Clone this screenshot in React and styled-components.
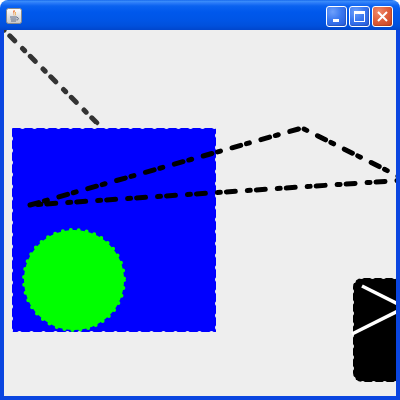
import React from "react";
import styled, { createGlobalStyle } from "styled-components";

const Global = createGlobalStyle`
  html, body { margin: 0; padding: 0; background: #ffffff; }
  body { font-family: "Liberation Sans", Arial, sans-serif; }
`;

const Window = styled.div`
  width: 400px;
  height: 400px;
  display: flex;
  flex-direction: column;
  overflow: hidden;
  border-radius: 8px 8px 0 0;
`;

const TitleBar = styled.div`
  height: 30px;
  flex: none;
  box-sizing: border-box;
  display: flex;
  align-items: flex-start;
  justify-content: space-between;
  padding: 6px 7px 0 6px;
  background: linear-gradient(
    to bottom,
    #0a5ce8 0px,
    #3d8ffb 1px,
    #2a7af8 3px,
    #0a62f0 6px,
    #0058ec 12px,
    #0055e6 20px,
    #0050dc 26px,
    #0046cc 30px
  );
`;

const AppIcon = styled.svg`
  width: 16px;
  height: 16px;
  margin-top: 2px;
  display: block;
`;

const Controls = styled.div`
  display: flex;
  gap: 2px;
`;

const CaptionButton = styled.div`
  width: 21px;
  height: 21px;
  box-sizing: border-box;
  border: 1px solid #ffffff;
  border-radius: 3px;
  display: flex;
  align-items: center;
  justify-content: center;
  background: ${(p) =>
    p.$close
      ? "radial-gradient(circle at 30% 25%, #f08a6c 0%, #e0603c 45%, #c8401e 100%)"
      : "radial-gradient(circle at 30% 25%, #6ea0fb 0%, #3a78f0 45%, #2558d8 100%)"};
  box-shadow: inset -1px -1px 1px rgba(0, 0, 0, 0.15);
`;

const Frame = styled.div`
  flex: 1;
  display: flex;
  box-sizing: border-box;
  border-style: solid;
  border-width: 0 4px 4px 4px;
  border-color: #0a45e0;
`;

const Canvas = styled.div`
  flex: 1;
  background: #eeeeee;
  overflow: hidden;
  display: flex;
`;

const Drawing = styled.svg`
  display: block;
  width: 392px;
  height: 366px;
`;

function JavaIcon() {
  return (
    <AppIcon viewBox="0 0 16 16">
      <defs>
        <linearGradient id="ib" x1="0" y1="0" x2="0" y2="1">
          <stop offset="0" stopColor="#ffffff" />
          <stop offset="1" stopColor="#c8c8c8" />
        </linearGradient>
      </defs>
      <rect x="0.5" y="0.5" width="15" height="15" rx="2" fill="url(#ib)" stroke="#8a8a8a" />
      <path d="M8 2 C6 4 9 5 7 8 C9 6 7 5 9 3 Z" fill="#e8601c" />
      <path d="M9.5 4 C8.5 5.5 10 6 9 7.5" stroke="#f0a030" strokeWidth="1" fill="none" />
      <path d="M4 9 H11 M4.5 11 H10.5 M5 13 H10" stroke="#5a6a88" strokeWidth="1" />
      <path d="M11 9.5 C13 9.5 13 12 10.5 12" stroke="#5a6a88" strokeWidth="1" fill="none" />
    </AppIcon>
  );
}

function MinGlyph() {
  return (
    <svg width="13" height="13" viewBox="0 0 13 13">
      <rect x="3" y="9" width="6" height="3" fill="#ffffff" />
    </svg>
  );
}

function MaxGlyph() {
  return (
    <svg width="13" height="13" viewBox="0 0 13 13">
      <rect x="1.5" y="1.5" width="10" height="10" fill="none" stroke="#ffffff" />
      <rect x="1" y="1" width="11" height="3" fill="#ffffff" />
    </svg>
  );
}

function CloseGlyph() {
  return (
    <svg width="13" height="13" viewBox="0 0 13 13">
      <path d="M2 2 L11 11 M11 2 L2 11" stroke="#ffffff" strokeWidth="2" />
    </svg>
  );
}

export default function App() {
  return (
    <>
      <Global />
      <Window>
        <TitleBar>
          <JavaIcon />
          <Controls>
            <CaptionButton>
              <MinGlyph />
            </CaptionButton>
            <CaptionButton>
              <MaxGlyph />
            </CaptionButton>
            <CaptionButton $close>
              <CloseGlyph />
            </CaptionButton>
          </Controls>
        </TitleBar>
        <Frame>
          <Canvas>
            <Drawing viewBox="4 30 392 366">
              <line
                x1="2"
                y1="28"
                x2="140"
                y2="166"
                stroke="#333333"
                strokeWidth="5"
                strokeDasharray="3 8 7 11"
                strokeLinecap="round"
              />
              <rect x="12" y="128" width="204" height="204" fill="#0000ff" shapeRendering="crispEdges" />
              <rect
                x="10.5"
                y="126.5"
                width="207"
                height="207"
                fill="none"
                stroke="#eeeeee"
                strokeWidth="5"
                strokeDasharray="0 12"
                strokeLinecap="round"
              />
              <circle
                cx="74"
                cy="280"
                r="50"
                fill="#00ff00"
                stroke="#00ff00"
                strokeWidth="4"
                strokeDasharray="0 8"
                strokeLinecap="round"
              />
              <polygon
                points="30,205 302,128 406,180"
                fill="none"
                stroke="#000000"
                strokeWidth="5"
                strokeDasharray="9 6 3 12"
                strokeLinecap="round"
              />
              <rect x="353" y="278" width="52" height="104" rx="9" fill="#000000" />
              <rect
                x="351.5"
                y="276.5"
                width="55"
                height="107"
                rx="10"
                fill="none"
                stroke="#eeeeee"
                strokeWidth="5"
                strokeDasharray="0 11"
                strokeLinecap="round"
              />
              <line x1="362" y1="286" x2="404" y2="307" stroke="#ffffff" strokeWidth="3.5" />
              <line x1="352" y1="334" x2="404" y2="308" stroke="#ffffff" strokeWidth="3.5" />
            </Drawing>
          </Canvas>
        </Frame>
      </Window>
    </>
  );
}
